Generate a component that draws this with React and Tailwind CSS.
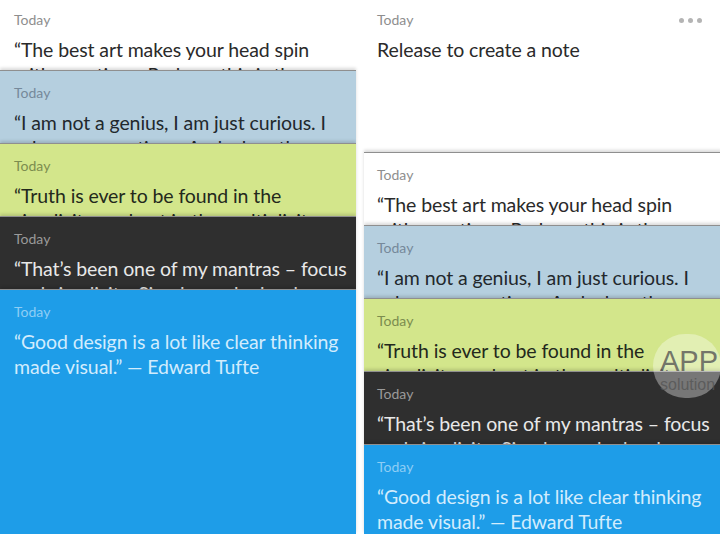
const notes = [
  {
    lines: ["\u201CThe best art makes your head spin", "with questions. Perhaps this is the", "definition of genius.\u201D"],
    card: "bg-white",
    label: "text-[#8e8e8e]",
    body: "text-[#2a2a2a]",
  },
  {
    lines: ["\u201CI am not a genius, I am just curious. I", "ask many questions. And when the", "answer is simple, then God is answering.\u201D"],
    card: "bg-[#b5cfdf]",
    label: "text-[#76899a]",
    body: "text-[#22282d]",
  },
  {
    lines: ["\u201CTruth is ever to be found in the", "simplicity, and not in the multiplicity", "and confusion of things.\u201D"],
    card: "bg-[#d3e68b]",
    label: "text-[#7c8d4f]",
    body: "text-[#23291c]",
  },
  {
    lines: ["\u201CThat\u2019s been one of my mantras \u2013 focus", "and simplicity. Simple can be harder", "than complex.\u201D"],
    card: "bg-[#2f2f2f]",
    label: "text-[#9a9a9a]",
    body: "text-[#e8e8e8]",
  },
  {
    lines: ["\u201CGood design is a lot like clear thinking", "made visual.\u201D \u2014 Edward Tufte"],
    card: "bg-[#1e9de8]",
    label: "text-[#8dcdf5]",
    body: "text-[#d2ecfd]",
  },
];

const font = { fontFamily: "Lato, 'Noto Sans', sans-serif" };
const markFont = { fontFamily: "'Liberation Sans', Arial, sans-serif" };

function NoteCard({ note, first, last, padLeft }) {
  return (
    <div
      className={`relative overflow-hidden ${note.card} ${
        first ? "h-[70px]" : "h-[73px] border-t border-[#8f8f8f] shadow-[0_-2px_3px_rgba(0,0,0,0.15)]"
      } ${last ? "flex-1" : "shrink-0"}`}
    >
      <div className={`${padLeft} ${first ? "pt-[11px]" : "pt-[13px]"}`}>
        <div className={`text-[14px] leading-[18px] ${note.label}`}>Today</div>
        <div className={`mt-[8px] text-[19.5px] leading-[25px] tracking-[-0.1px] ${note.body}`}>
          {note.lines.map((l, i) => (
            <div key={i} className="whitespace-nowrap">{l}</div>
          ))}
        </div>
      </div>
    </div>
  );
}

export default function App() {
  return (
    <div className="w-[720px] h-[534px] flex bg-white overflow-hidden" style={font}>
      {/* left: list at rest */}
      <div className="w-[356px] h-full flex flex-col">
        {notes.map((n, i) => (
          <NoteCard key={i} note={n} first={i === 0} last={i === notes.length - 1} padLeft="pl-[14px]" />
        ))}
      </div>

      <div className="w-[8px] shrink-0 bg-white" />

      {/* right: pulled down to create */}
      <div className="relative flex-1 h-full flex flex-col">
        <div className="h-[152px] shrink-0 bg-white pl-[13px] pr-[20px] pt-[11px]">
          <div className="flex items-center justify-between">
            <span className="text-[14px] leading-[18px] text-[#8e8e8e]">Today</span>
            <div className="flex gap-[4px] mt-[1px]">
              <span className="w-[5px] h-[5px] rounded-full bg-[#b4b4b4]" />
              <span className="w-[5px] h-[5px] rounded-full bg-[#b4b4b4]" />
              <span className="w-[5px] h-[5px] rounded-full bg-[#b4b4b4]" />
            </div>
          </div>
          <div className="mt-[8px] text-[19.5px] leading-[25px] tracking-[-0.1px] text-[#2a2a2a]">Release to create a note</div>
        </div>
        {notes.map((n, i) => (
          <NoteCard key={i} note={n} first={false} last={i === notes.length - 1} padLeft="pl-[13px]" />
        ))}

        {/* watermark */}
        <div className="absolute z-10 left-[289px] top-[334px] w-[68px] h-[64px] rounded-full bg-white/35 flex flex-col items-start pl-[7px] pt-[13px] leading-none">
          <span className="text-[29px] text-[#555555]/80" style={markFont}>APP</span>
          <span className="text-[16px] text-[#555555]/80 mt-[1px]" style={markFont}>solution</span>
        </div>
      </div>
    </div>
  );
}
